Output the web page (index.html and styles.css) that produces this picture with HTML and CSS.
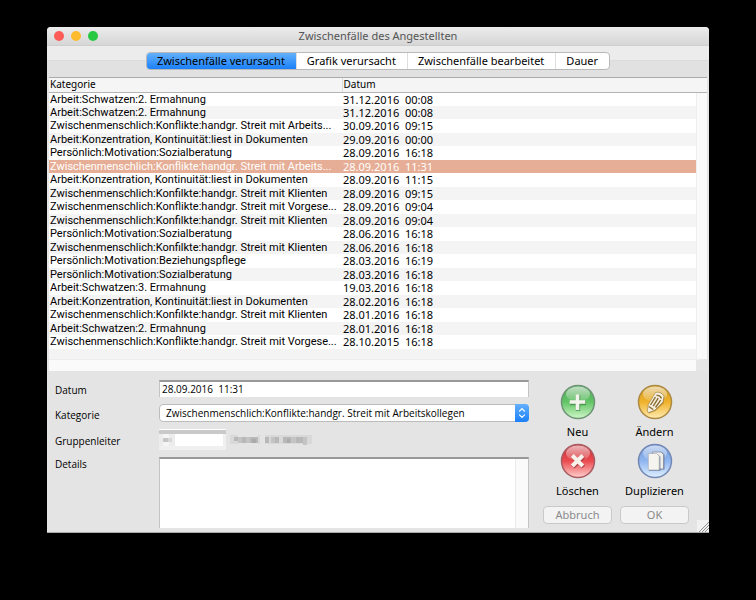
FILE: index.html
```html
<!DOCTYPE html>
<html lang="de">
<head>
<meta charset="utf-8">
<title>Zwischenfälle des Angestellten</title>
<link rel="stylesheet" href="styles.css">
</head>
<body>
<main class="window">
  <header class="titlebar">
    <div class="lights"><button class="light close" aria-label="Schließen"></button><button class="light minimize" aria-label="Minimieren"></button><button class="light maximize" aria-label="Maximieren"></button></div>
    <h1>Zwischenfälle des Angestellten</h1>
  </header>
  <nav class="tabbar">
    <div class="tabs">
      <button class="tab active">Zwischenfälle verursacht</button>
      <button class="tab">Grafik verursacht</button>
      <button class="tab">Zwischenfälle bearbeitet</button>
      <button class="tab">Dauer</button>
    </div>
  </nav>
  <section class="list">
    <table>
      <colgroup><col class="col-category"><col></colgroup>
      <thead><tr><th>Kategorie</th><th>Datum</th></tr></thead>
      <tbody>
        <tr><td>Arbeit:Schwatzen:2. Ermahnung</td><td>31.12.2016  00:08</td></tr>
        <tr><td>Arbeit:Schwatzen:2. Ermahnung</td><td>31.12.2016  00:08</td></tr>
        <tr><td>Zwischenmenschlich:Konflikte:handgr. Streit mit Arbeits...</td><td>30.09.2016  09:15</td></tr>
        <tr><td>Arbeit:Konzentration, Kontinuität:liest in Dokumenten</td><td>29.09.2016  00:00</td></tr>
        <tr><td>Persönlich:Motivation:Sozialberatung</td><td>28.09.2016  16:18</td></tr>
        <tr class="selected"><td>Zwischenmenschlich:Konflikte:handgr. Streit mit Arbeits...</td><td>28.09.2016  11:31</td></tr>
        <tr><td>Arbeit:Konzentration, Kontinuität:liest in Dokumenten</td><td>28.09.2016  11:15</td></tr>
        <tr><td>Zwischenmenschlich:Konfilkte:handgr. Streit mit Klienten</td><td>28.09.2016  09:15</td></tr>
        <tr><td>Zwischenmenschlich:Konflikte:handgr. Streit mit Vorgese...</td><td>28.09.2016  09:04</td></tr>
        <tr><td>Zwischenmenschlich:Konfilkte:handgr. Streit mit Klienten</td><td>28.09.2016  09:04</td></tr>
        <tr><td>Persönlich:Motivation:Sozialberatung</td><td>28.06.2016  16:18</td></tr>
        <tr><td>Zwischenmenschlich:Konfilkte:handgr. Streit mit Klienten</td><td>28.06.2016  16:18</td></tr>
        <tr><td>Persönlich:Motivation:Beziehungspflege</td><td>28.03.2016  16:19</td></tr>
        <tr><td>Persönlich:Motivation:Sozialberatung</td><td>28.03.2016  16:18</td></tr>
        <tr><td>Arbeit:Schwatzen:3. Ermahnung</td><td>19.03.2016  16:18</td></tr>
        <tr><td>Arbeit:Konzentration, Kontinuität:liest in Dokumenten</td><td>28.02.2016  16:18</td></tr>
        <tr><td>Zwischenmenschlich:Konfilkte:handgr. Streit mit Klienten</td><td>28.01.2016  16:18</td></tr>
        <tr><td>Arbeit:Schwatzen:2. Ermahnung</td><td>28.01.2016  16:18</td></tr>
        <tr><td>Zwischenmenschlich:Konflikte:handgr. Streit mit Vorgese...</td><td>28.10.2015  16:18</td></tr>
      </tbody>
    </table>
    <div class="list-rest"></div>
    <div class="list-vscroll"></div>
    <div class="list-hscroll"></div>
  </section>
  <form class="editor">
    <div class="fields">
      <label for="date">Datum</label>
      <input id="date" class="date" type="text" value="28.09.2016  11:31">
      <label for="category">Kategorie</label>
      <div class="popup">
        <select id="category"><option>Zwischenmenschlich:Konflikte:handgr. Streit mit Arbeitskollegen</option></select>
        <svg class="popup-arrows" viewBox="0 0 14 18"><path d="M4.5 7.2 7 4.7l2.500 2.500M4.500 10.800 7 13.300l2.500-2.500" fill="none" stroke="#fff" stroke-width="1.200" stroke-linecap="round"/></svg>
      </div>
      <label for="leader">Gruppenleiter</label>
      <div class="leader">
        <input id="leader" type="text">
        <svg class="mosaic-code" viewBox="0 0 67 21" aria-hidden="true">
          <path fill="#c9c9c9" d="M0 1h67v4H0z"/><path fill="#ececec" d="M0 5h4v12H0zM10 5h6v12h-6z"/><path fill="#f5f5f5" d="M4 5h6v4H4zM4 13h6v4H4z"/><path fill="#c6c4c6" d="M4 9h5v4H4z"/><path fill="#d8d8d8" d="M9 9h4v4H9z"/><path fill="#f0f0f0" d="M0 17h67v4H0zM64 5h3v12h-3z"/>
        </svg>
        <svg class="mosaic-name" viewBox="0 0 86 12" aria-hidden="true">
          <path fill="#d9d9d9" d="M0 1h8v9H0zM28 1h2v9h-2zM35 1h47v9H35z"/><path fill="#b8b8b8" d="M4 3h5v4H4zM12 3h4v6h-4zM20 3h8v6h-8zM35 3h4v6h-4zM45 3h4v6h-4zM53 3h8v6h-8zM66 3h7v6h-7z"/><path fill="#c4c4c4" d="M8 3h4v6H8zM16 3h4v6h-4zM41 3h4v6h-4zM61 3h5v6h-5zM73 3h4v8h-4z"/><path fill="#aaa" d="M22 5h4v4h-4zM57 5h3v4h-3z"/>
        </svg>
      </div>
      <label for="details" class="top">Details</label>
      <div class="details"><textarea id="details"></textarea><div class="details-scroll"></div></div>
    </div>
    <div class="actions">
      <button type="button" class="action">
        <svg viewBox="0 0 36 36">
          <defs>
            <linearGradient id="green" x2="0" y2="1"><stop offset="0" stop-color="#4fa557"/><stop offset=".5" stop-color="#62c466"/><stop offset="1" stop-color="#d0f7c9"/></linearGradient>
            <linearGradient id="gold" x2="0" y2="1"><stop offset="0" stop-color="#d09a20"/><stop offset=".5" stop-color="#f0b22c"/><stop offset="1" stop-color="#ffecb0"/></linearGradient>
            <linearGradient id="red" x2="0" y2="1"><stop offset="0" stop-color="#c62f36"/><stop offset=".5" stop-color="#ea4b50"/><stop offset="1" stop-color="#ffd0ce"/></linearGradient>
            <linearGradient id="blue" x2="0" y2="1"><stop offset="0" stop-color="#6f98db"/><stop offset=".5" stop-color="#8fb6f0"/><stop offset="1" stop-color="#e0f0ff"/></linearGradient>
            <linearGradient id="shine" x2="0" y2="1"><stop offset="0" stop-color="#fff" stop-opacity=".65"/><stop offset="1" stop-color="#fff" stop-opacity=".1"/></linearGradient>
          </defs>
          <circle cx="18" cy="18" r="16.500" fill="url(#green)" stroke="#6c9475" stroke-width="1.500"/><ellipse cx="18" cy="10" rx="12" ry="7.500" fill="url(#shine)"/>
          <path d="M18 11v16M10 19h16" stroke="#35763b" stroke-opacity=".6" stroke-width="4.500"/><path d="M17.500 10.500v15.500M9.700 18h15.600" stroke="#f5f3ed" stroke-width="3.600"/>
        </svg>
        <span>Neu</span>
      </button>
      <button type="button" class="action">
        <svg viewBox="0 0 36 36">
          <circle cx="18" cy="18" r="16.500" fill="url(#gold)" stroke="#ad8a42" stroke-width="1.500"/><ellipse cx="18" cy="10" rx="12" ry="7.500" fill="url(#shine)"/>
          <path d="M19.500 9.500q4-1.500 8 3.500l-1 6.500-8 7.500-6.500 2.500-1.500-1.500 1-7z" fill="#8d6820" opacity=".55"/>
          <path d="M18.500 8.500q5-1.500 8.500 3.500l-1 6-8 8-6.500 2.700-1.200-1.700 1-6.500z" fill="#f5efdf" stroke="#9b7b3c" stroke-width=".6"/>
          <path d="M19.500 11.500q3.500-.7 5 3M18.500 13l-5 8M21.200 14.200l-5 8M23.700 16.200l-5.200 7.300M11.700 22.500l4.500 3" fill="none" stroke="#8b6c32" stroke-width="1.400"/>
        </svg>
        <span>Ändern</span>
      </button>
      <button type="button" class="action">
        <svg viewBox="0 0 36 36">
          <circle cx="18" cy="18" r="16.500" fill="url(#red)" stroke="#a85b61" stroke-width="1.500"/><ellipse cx="18" cy="10" rx="12" ry="7.500" fill="url(#shine)"/>
          <path d="m13 13.500 10.500 10.500M23.500 13.500 13 24" stroke="#8b2328" stroke-opacity=".6" stroke-width="4.500"/><path d="m12.300 12.500 10.500 10.500M22.800 12.500 12.300 23" stroke="#f8f2ec" stroke-width="4"/>
        </svg>
        <span>Löschen</span>
      </button>
      <button type="button" class="action">
        <svg viewBox="0 0 36 36">
          <circle cx="18" cy="18" r="16.500" fill="url(#blue)" stroke="#7388b4" stroke-width="1.500"/><ellipse cx="18" cy="10" rx="12" ry="7.500" fill="url(#shine)"/>
          <path d="M16.500 9.500h9l2 2.500v14.500h-11z" fill="#566786" opacity=".7"/><path d="M15.500 9h8.500l2.500 2.500V26h-11z" fill="#f0efeb" stroke="#7c8391" stroke-width=".7"/>
          <path d="M12 11h8.500l3 2.800V28H12z" fill="#566786" opacity=".6"/><path d="M11.300 10.500h8.400l2.500 2.500v14H11.300z" fill="#f6f4ee" stroke="#a0a3ae" stroke-width=".6"/>
        </svg>
        <span>Duplizieren</span>
      </button>
      <button type="button" class="push" disabled>Abbruch</button>
      <button type="button" class="push" disabled>OK</button>
    </div>
    <svg class="grip" viewBox="0 0 12 12" aria-hidden="true"><path fill="#f1f1f1" d="M0 0h12v12H0z"/><path d="M2 12 12 2M5 12l7-7M8 12l4-4" stroke="#8c8c8c" stroke-width="1"/></svg>
  </form>
</main>
</body>
</html>
```
FILE: styles.css
```css
* { box-sizing: border-box; }

body {
  margin: 0;
  padding: 27px 47px;
  background: #000;
  color: #000;
  font-family: "Noto Sans", "Open Sans", sans-serif;
  font-size: 11px;
  line-height: 14px;
}

button, input, select, textarea { margin: 0; font: inherit; color: inherit; }

.window {
  overflow: hidden;
  border-radius: 4px 4px 0 0;
  background: #e4e4e4;
}

.titlebar {
  display: grid;
  grid-template-columns: 60px 1fr 60px;
  align-items: center;
  height: 19px;
  border-bottom: 1px solid #cfcfcf;
  background: linear-gradient(#ececec, #d6d6d6);
}

.titlebar h1 {
  margin: 0;
  font-size: 11px;
  font-weight: 400;
  text-align: center;
  color: #555;
}

.lights { display: flex; gap: 7px; padding-left: 7px; }

.light {
  width: 10px;
  height: 10px;
  padding: 0;
  border: 0;
  border-radius: 50%;
}

.close { background: #fc5b57; }
.minimize { background: #fdbb2f; }
.maximize { background: #28c840; }

.tabbar {
  display: flex;
  justify-content: center;
  padding: 6px 0 7px;
  background: linear-gradient(#ececec 14px, #dcdcdc 14px, #dcdcdc 15px, #e1e1e1 15px);
}

.tabs {
  display: flex;
  height: 18px;
  border: 1px solid #b9b9b9;
  border-radius: 4px;
  background: #fff;
  overflow: hidden;
}

.tab {
  padding: 0 11px 0 10px;
  border: 0;
  border-left: 1px solid #dedede;
  background: none;
  font-size: 11px;
  line-height: 16px;
}

.tab.active { border-left: 0; background: linear-gradient(#64b0fb, #1b80fa); }

.list {
  position: relative;
  margin: 0 2px;
  border-top: 1px solid #a9aba6;
  background: #fff;
}

table { width: 100%; border-collapse: collapse; table-layout: fixed; }
.col-category { width: 293px; }

th {
  height: 14px;
  padding: 0 1px;
  border-bottom: 1px solid #b4b4b4;
  background: #f5f5f5;
  font-size: 10px;
  font-weight: 400;
  line-height: 13px;
  text-align: left;
}

th + th { border-left: 1px solid #ddd; }

td {
  height: 14px;
  padding: 0 1px;
  line-height: 13px;
  vertical-align: top;
  white-space: pre;
}

td:first-child { font-family: Roboto, "Noto Sans", sans-serif; }

tbody tr:nth-child(even) { background: #f4f4f4; }
tbody tr:nth-child(even) td { height: 13px; }
tbody tr.selected { background: #e6ae96; color: #fff; }

.list-rest { height: 10px; background: #f4f4f4; }

.list-vscroll {
  position: absolute;
  top: 15px;
  right: 0;
  bottom: 12px;
  width: 11px;
  border-left: 1px solid #eee;
  background: #fafafa;
}

.list-hscroll {
  height: 12px;
  border-top: 1px solid #ededed;
  border-right: 11px solid #e6e6e6;
  background: #fafafa;
}

.editor {
  position: relative;
  display: grid;
  grid-template-columns: minmax(0, 1fr) 146px;
  column-gap: 14px;
  padding: 9px 20px 4px 8px;
  border-bottom: 1px solid #aaa;
  font-size: 10px;
}

.fields {
  display: grid;
  grid-template-columns: 104px minmax(0, 1fr);
  grid-template-rows: 17px 18px 21px 71px;
  row-gap: 7px;
  align-items: center;
  font-family: "Open Sans", "Noto Sans", sans-serif;
}

.fields label { padding-top: 3px; }
.fields label.top { align-self: start; padding-top: 0; }

.date {
  width: 100%;
  height: 17px;
  padding: 0 2px 2px;
  border: 1px solid #c4c4c4;
  border-top: 2px solid #999;
  border-bottom: 0;
  background: #fff;
}

.popup { position: relative; }

.popup select {
  display: block;
  width: 100%;
  height: 18px;
  padding: 0 20px 0 6px;
  border: 1px solid #bcbcbc;
  border-radius: 4px;
  background: #fff;
  appearance: none;
}

.popup-arrows {
  position: absolute;
  top: 0;
  right: 0;
  width: 14px;
  height: 18px;
  border-radius: 0 4px 4px 0;
  background: linear-gradient(#64b0fb, #1b80fa);
}

.leader { position: relative; display: flex; align-items: center; gap: 4px; }

.leader input {
  width: 67px;
  height: 21px;
  border: 0;
  background: #fff;
}

.mosaic-code { position: absolute; top: 0; left: 0; width: 67px; height: 21px; pointer-events: none; }
.mosaic-name { width: 86px; height: 12px; }

.details {
  display: flex;
  height: 71px;
  border: 1px solid #c4c4c4;
  border-top: 2px solid #999;
  border-bottom: 0;
  background: #fff;
}

.details textarea {
  flex: 1;
  min-width: 0;
  padding: 2px;
  border: 0;
  background: none;
  resize: none;
}

.details-scroll { width: 13px; border-left: 1px solid #ebebeb; background: #fafafa; }

.actions {
  display: grid;
  grid-template-columns: 1fr 1fr;
  grid-template-rows: 56px 56px 22px;
  column-gap: 8px;
  row-gap: 3px;
  align-content: start;
  padding-top: 4px;
  font-size: 11px;
}

.action {
  display: flex;
  flex-direction: column;
  align-items: center;
  gap: 5px;
  padding: 0;
  border: 0;
  background: none;
}

.action svg { width: 36px; height: 36px; }

.push {
  align-self: end;
  height: 18px;
  padding: 0;
  border: 1px solid #c9c9c9;
  border-radius: 4px;
  background: #f3f3f3;
  color: #8a8a8a;
  line-height: 16px;
}

.grip { position: absolute; right: 0; bottom: 0; width: 12px; height: 12px; }
```
